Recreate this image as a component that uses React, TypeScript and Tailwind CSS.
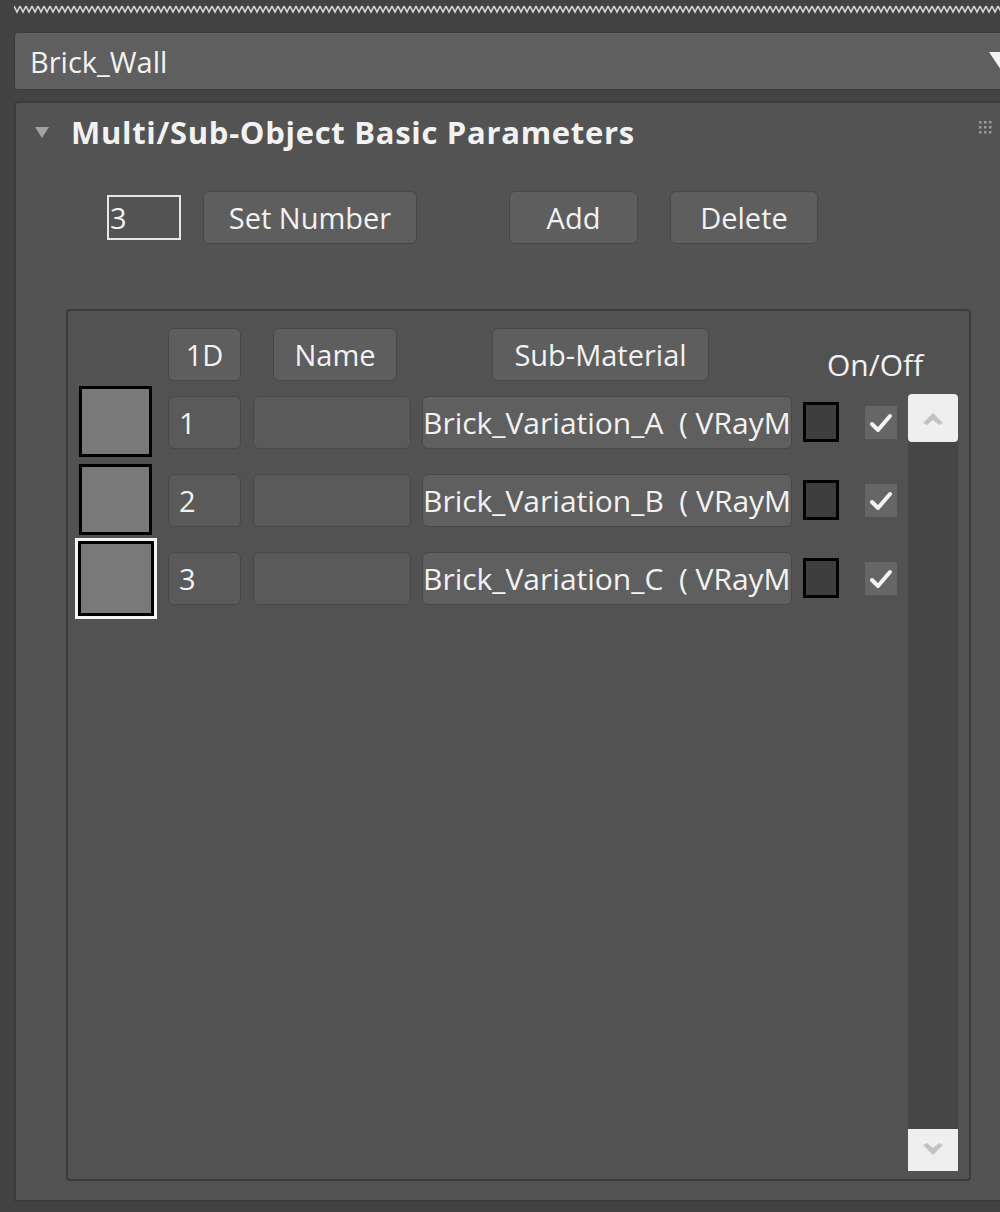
import React from 'react';

const font = { fontFamily: '"Open Sans", "Noto Sans", sans-serif' };

const subMaterials = [
  { id: 1, label: 'Brick_Variation_A  ( VRayM', selected: false },
  { id: 2, label: 'Brick_Variation_B  ( VRayM', selected: false },
  { id: 3, label: 'Brick_Variation_C  ( VRayM', selected: true },
];

function Zigzag() {
  return (
    <svg width="986" height="10" className="block">
      <defs>
        <pattern id="zig" width="6" height="10" patternUnits="userSpaceOnUse">
          <path d="M0 2 L3 8 L6 2" fill="none" stroke="#d8d8d8" strokeWidth="1.6" />
        </pattern>
      </defs>
      <rect width="986" height="10" fill="url(#zig)" />
    </svg>
  );
}

function Grip() {
  return (
    <svg width="16" height="16" className="block">
      {[0, 1, 2].map((r) =>
        [0, 1, 2].map((c) => <rect key={`${r}-${c}`} x={1 + c * 5} y={1 + r * 5} width="2.5" height="2.5" fill="#9a9a9a" />)
      )}
    </svg>
  );
}

function Check() {
  return (
    <svg width="24" height="22" viewBox="0 0 24 22">
      <path d="M3 12 L9 18 L21 4" fill="none" stroke="#f4f4f4" strokeWidth="4" strokeLinecap="round" strokeLinejoin="round" />
    </svg>
  );
}

// scroll arrows are small filled arrowheads
function Chevron({ up }: { up?: boolean }) {
  return (
    <svg width="24" height="16" viewBox="0 0 24 16">
      <path
        d={up ? 'M2 13 L12 3 L22 13 L18 15 L12 10 L6 15 Z' : 'M2 3 L12 13 L22 3 L18 1 L12 6 L6 1 Z'}
        fill="#c2c2c2"
        strokeLinejoin="round"
      />
    </svg>
  );
}

function Btn({ label, className }: { label: string; className: string }) {
  return (
    <div
      className={`h-[53px] shrink-0 flex items-center justify-center rounded-md bg-[#5e5e5e] border border-[#484848] text-[29px] text-[#f2f2f2] ${className}`}
    >
      {label}
    </div>
  );
}

export default function App() {
  return (
    <div className="w-[1000px] h-[1212px] overflow-hidden bg-[#434343] text-[#f2f2f2]" style={font}>
      <div className="pt-[4px] pl-[14px]">
        <Zigzag />
      </div>

      {/* material name dropdown */}
      <div className="mt-[18px] ml-[14px] w-[1000px] h-[58px] flex items-center bg-[#5f5f5f] border border-[#3a3a3a] rounded-sm pl-[15px] relative">
        <span className="text-[29px] leading-none">Brick_Wall</span>
        <div className="absolute left-[974px] top-[19px] w-0 h-0 border-l-[12px] border-r-[12px] border-t-[18px] border-l-transparent border-r-transparent border-t-[#f2f2f2]" />
      </div>

      {/* rollout */}
      <div className="mt-[11px] ml-[14px] w-[990px] h-[1101px] bg-[#535353] border-l-2 border-t-2 border-b-2 border-[#3c3c3c] rounded-tl-sm flex flex-col">
        <div className="h-[58px] flex items-center pl-[19px] pr-[10px]">
          <div className="w-0 h-0 border-l-[7px] border-r-[7px] border-t-[11px] border-l-transparent border-r-transparent border-t-[#a2a2a2]" />
          <span className="ml-[22px] text-[31px] font-bold tracking-[0.7px] leading-none">Multi/Sub-Object Basic Parameters</span>
          <div className="ml-auto -mt-[8px]">
            <Grip />
          </div>
        </div>

        <div className="mt-[30px] h-[53px] flex items-center pl-[91px]">
          <div className="w-[74px] h-[45px] border-2 border-[#e6e6e6] flex items-center pl-[1px] text-[29px] leading-none">3</div>
          <Btn label="Set Number" className="ml-[22px] w-[214px]" />
          <Btn label="Add" className="ml-[92px] w-[129px]" />
          <Btn label="Delete" className="ml-[32px] w-[148px]" />
        </div>

        {/* sub-material list */}
        <div className="mt-[65px] ml-[50px] w-[905px] h-[872px] bg-[#525252] border-2 border-[#3b3b3b] rounded-sm flex">
          <div className="flex-1 min-w-0 pl-[11px] pt-[17px]">
            <div className="h-[58px] flex items-start">
              <Btn label="1D" className="ml-[89px] w-[73px]" />
              <Btn label="Name" className="ml-[32px] w-[124px]" />
              <Btn label="Sub-Material" className="ml-[95px] w-[217px]" />
              <span className="ml-[118px] mt-[22px] text-[30px] leading-none whitespace-nowrap">On/Off</span>
            </div>

            {subMaterials.map((m) => (
              <div key={m.id} className="h-[78px] flex items-start">
                {m.selected ? (
                  <div className="-ml-[4px] -mr-[5px] -mt-[4px] w-[82px] h-[81px] shrink-0 border-[3px] border-[#f4f4f4]">
                    <div className="w-full h-full bg-[#797979] border-[3px] border-black" />
                  </div>
                ) : (
                  <div className="w-[73px] h-[71px] shrink-0 bg-[#797979] border-[3px] border-black" />
                )}
                <div className="mt-[10px] ml-[16px] w-[73px] h-[53px] shrink-0 rounded-md bg-[#5a5a5a] border border-[#484848] flex items-center pl-[10px] text-[29px]">
                  {m.id}
                </div>
                <div className="mt-[10px] ml-[12px] w-[158px] h-[53px] shrink-0 rounded-md bg-[#5a5a5a] border border-[#484848]" />
                <div className="mt-[10px] ml-[11px] w-[370px] h-[53px] shrink-0 rounded-md bg-[#5f5f5f] border border-[#484848] flex items-center whitespace-pre text-[30px]">
                  {m.label}
                </div>
                <div className="mt-[16px] ml-[11px] w-[36px] h-[40px] shrink-0 bg-[#3e3e3e] border-[3px] border-black" />
                <div className="mt-[20px] ml-[26px] w-[32px] h-[33px] shrink-0 bg-[#666666] flex items-center justify-center">
                  <Check />
                </div>
              </div>
            ))}
          </div>

          {/* scrollbar */}
          <div className="w-[50px] shrink-0 mr-[11px] mt-[83px] mb-[8px] flex flex-col bg-[#464646]">
            <div className="h-[48px] bg-[#efefef] rounded-sm flex items-center justify-center">
              <Chevron up />
            </div>
            <div className="flex-1" />
            <div className="h-[42px] bg-[#efefef] flex items-center justify-center">
              <Chevron />
            </div>
          </div>
        </div>
      </div>
    </div>
  );
}
